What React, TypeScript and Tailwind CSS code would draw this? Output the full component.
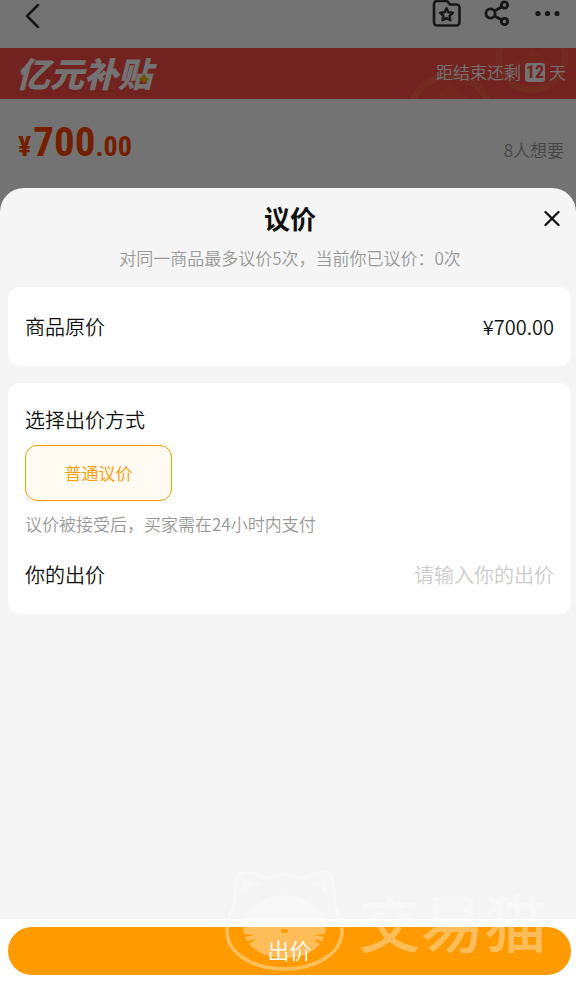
import React from "react";

const STAR = "M14.5 8.2l1.9 4 4.4.6-3.2 3 .8 4.4-3.9-2.1-3.9 2.1.8-4.4-3.2-3 4.400-.6z";

function TopBar() {
  return (
    <header className="flex h-12 items-start justify-between pl-5 pr-3">
      <button aria-label="返回" className="pt-1">
        <svg width="24" height="24" viewBox="0 0 24 24" fill="none" stroke="#333" strokeWidth="2.6" strokeLinecap="round" strokeLinejoin="round">
          <path d="M18 1 7 12l11 11" />
        </svg>
      </button>
      <div className="flex items-start gap-5">
        <button aria-label="收藏">
          <svg width="30" height="28" viewBox="0 0 30 28" fill="none" stroke="#333" strokeWidth="2.600" strokeLinejoin="round">
            <path d="M5 1h9q1.500 0 2.300 1.300l.7 1.200q.6 1 2 1h5.500a3 3 0 0 1 3 3V22.500a3 3 0 0 1-3 3H5a3 3 0 0 1-3-3V4a3 3 0 0 1 3-3z" />
            <path d={STAR} strokeWidth="2.400" />
          </svg>
        </button>
        <button aria-label="分享">
          <svg width="30" height="28" viewBox="0 0 30 28" fill="none" stroke="#333" strokeWidth="2.800">
            <circle cx="8.500" cy="13.500" r="4.600" />
            <circle cx="22.500" cy="5" r="3.200" />
            <circle cx="22.500" cy="21.500" r="3.200" />
            <path d="M12.500 11l7.500-4.300M12.500 16l7.500 4" />
          </svg>
        </button>
        <button aria-label="更多">
          <svg width="32" height="28" viewBox="0 0 32 28" fill="#333">
            <circle cx="6" cy="13.500" r="2.600" />
            <circle cx="15.500" cy="13.500" r="2.600" />
            <circle cx="25" cy="13.500" r="2.600" />
          </svg>
        </button>
      </div>
    </header>
  );
}

function CoinPattern() {
  return (
    <svg className="absolute right-0 top-0" width="176" height="51" viewBox="0 0 176 51" fill="none" aria-hidden="true">
      <g fill="#ff5f46">
        <path d="M133 -3q6 14 22 20H111q16-6 22-20z" opacity=".6" />
        <path d="M50 33q6 12 20 18H30q14-6 20-18z" opacity=".6" />
      </g>
      <g stroke="#ff5d46" strokeWidth="7">
        <circle cx="132" cy="9" r="33" />
        <circle cx="50" cy="69" r="41" />
      </g>
    </svg>
  );
}

function Banner() {
  return (
    <section className="relative flex h-[51px] items-start justify-between bg-[#ff4e46] pl-4 pr-[10px] text-white">
      <CoinPattern />
      <h1 className="relative text-[34px] font-black italic leading-[50px]">
        亿元补贴
        <svg className="absolute bottom-[13px] right-[2px]" width="12" height="12" viewBox="0 0 12 12" aria-hidden="true">
          <path d="M6 0q1 5 6 6-5 1-6 6-1-5-6-6 5-1 6-6z" fill="#f5b800" />
        </svg>
      </h1>
      <p className="relative flex items-center gap-1 pt-3 text-[17px] font-[350] leading-6">
        距结束还剩
        <span className="flex h-[19px] w-5 items-center justify-center rounded-[3px] bg-white font-['Roboto_Condensed','Roboto',sans-serif] text-[18px] font-bold text-[#ff4e46]">
          12
        </span>
        天
      </p>
    </section>
  );
}

function PriceRow() {
  return (
    <section className="flex h-[89px] items-start justify-between pl-[18px] pr-3 pt-[19px]">
      <p className="flex items-baseline font-['Roboto_Condensed','Roboto',sans-serif] font-bold leading-[48px] text-[#ff4600]">
        <span className="pr-[2px] text-[28px]">¥</span>
        <span className="text-[41px]">700</span>
        <span className="text-[28px]">.00</span>
      </p>
      <p className="pt-5 text-[17px] font-[350] leading-6 text-[#999]">8人想要</p>
    </section>
  );
}

function Watermark() {
  return (
    <div className="pointer-events-none absolute bottom-[19px] right-[29px] flex items-center gap-[14px] opacity-35" aria-hidden="true">
      <svg width="120" height="102" viewBox="223 868 120 102" fill="none">
        <path
          d="M226 930q0-12 7-25 .5-15 3-26 2-9 11-8 8 1 15 6 22-6 43 0 7-5 15-6 9-1 11 8 2.500 11 3 26 7 13 7 25c0 23-27 38-57.500 38s-57.500-15-57.500-38z"
          stroke="#fff"
          strokeWidth="3.600"
        />
        <path d="M241 894q0-8 1-12 .5-3 4-3 7 0 14 4-14 2-19 11zM326 894q0-8-1-12-.5-3-4-3-7 0-14 4 14 2 19 11z" fill="#fff" />
        <path
          d="M242 925q-1-18 14-20 10-12 27.500-12t27.500 12q15 2 14 20l-1 8-11 1 10 2-2 4-9-2 7 5q-12 14-35.500 14t-35.500-14l7-5-9 2-2-4 10-2-11-1zM280 930q0 2 3.500 2t3.500-2-3.500-2-3.500 2z"
          fill="#fff"
          fillRule="evenodd"
        />
      </svg>
      <span className="text-[63px] font-medium leading-[92px] text-white">交易猫</span>
    </div>
  );
}

function BargainSheet() {
  return (
    <main role="dialog" aria-labelledby="sheet-title" className="relative flex flex-1 flex-col overflow-hidden rounded-t-[24px] bg-[#f5f5f5] font-[350] text-[#111]">
      <div className="relative flex h-[99px] flex-col items-center pl-1 pt-3">
        <h2 id="sheet-title" className="text-[26px] font-bold leading-[35px]">议价</h2>
        <p className="pt-[11px] text-[17px] leading-6 text-[#999]">对同一商品最多议价5次，当前你已议价：0次</p>
        <button aria-label="关闭" className="absolute right-4 top-[22px]">
          <svg width="16" height="17" viewBox="0 0 16 17" fill="none" stroke="#111" strokeWidth="2.300" strokeLinecap="round">
            <path d="M1.500 2l13 13M14.500 2l-13 13" />
          </svg>
        </button>
      </div>

      <div className="flex flex-1 flex-col gap-[17px] pl-2 pr-[5px]">
        <section className="flex items-center justify-between rounded-[12px] bg-white px-[17px] py-6 text-[20px] leading-[31px]">
          <span>商品原价</span>
          <span>¥700.00</span>
        </section>

        <section className="rounded-[12px] bg-white px-[17px] pb-6 pt-[21px]">
          <h3 className="text-[20px] leading-[31px]">选择出价方式</h3>
          <button className="mt-[10px] h-14 w-[147px] rounded-[12px] border border-[#ff9a00] bg-[#fffaf2] text-[17px] text-[#ff9a00]">
            普通议价
          </button>
          <p className="mt-[11px] text-[17px] leading-6 text-[#999]">议价被接受后，买家需在24小时内支付</p>
          <div className="mt-[23px] flex items-center justify-between text-[20px] leading-[31px]">
            <label htmlFor="offer" className="shrink-0">你的出价</label>
            <input
              id="offer"
              inputMode="decimal"
              placeholder="请输入你的出价"
              className="min-w-0 flex-1 bg-transparent text-right outline-none placeholder:text-[#ccc]"
            />
          </div>
        </section>
      </div>

      <footer className="bg-white pb-[15px] pl-2 pr-[5px] pt-2">
        <button className="h-12 w-full rounded-full bg-[#ff9a00] pb-1 text-[22px] text-white">出价</button>
      </footer>
      <Watermark />
    </main>
  );
}

export default function App() {
  return (
    <div className="relative flex min-h-screen flex-col bg-white font-['Noto_Sans_CJK_SC',sans-serif]">
      <TopBar />
      <Banner />
      <PriceRow />
      <div className="absolute inset-0 bg-black/55" />
      <BargainSheet />
    </div>
  );
}
